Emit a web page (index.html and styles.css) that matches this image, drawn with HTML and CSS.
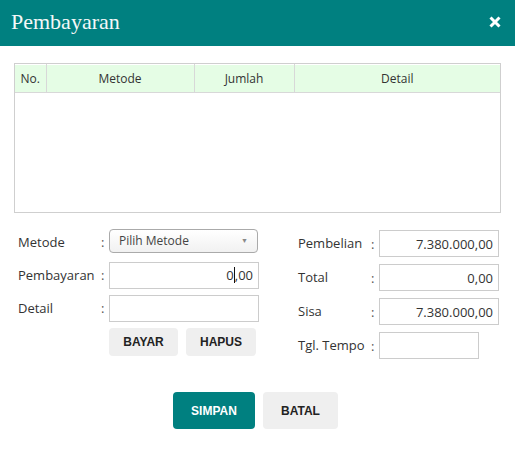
FILE: index.html
```html
<!DOCTYPE html>
<html>
<head>
<meta charset="utf-8">
<link rel="stylesheet" href="styles.css">
</head>
<body>
<div class="modal">
  <div class="modal-header">
    <h1 class="title">Pembayaran</h1>
    <svg class="close" width="12" height="12" viewBox="0 0 12 12"><path d="M1.5 1.5 L10.5 10.5 M10.5 1.5 L1.5 10.5" stroke="#fff" stroke-width="3" stroke-linecap="butt"/></svg>
  </div>
  <div class="modal-body">
    <div class="table-wrap">
      <table class="pay-table">
        <thead>
          <tr>
            <th class="c-no">No.</th>
            <th class="c-metode">Metode</th>
            <th class="c-jumlah">Jumlah</th>
            <th class="c-detail">Detail</th>
          </tr>
        </thead>
      </table>
    </div>
    <div class="form">
      <div class="col col-left">
        <div class="row">
          <span class="label">Metode</span><span class="colon">:</span>
          <div class="select"><span>Pilih Metode</span><span class="arrow">&#x25BC;</span></div>
        </div>
        <div class="row">
          <span class="label">Pembayaran</span><span class="colon">:</span>
          <div class="field right">0<span class="caret"></span>,00</div>
        </div>
        <div class="row">
          <span class="label">Detail</span><span class="colon">:</span>
          <div class="field"></div>
        </div>
        <div class="row btn-row">
          <span class="label"></span><span class="colon"></span>
          <div class="btns">
            <button class="btn btn-small bayar">BAYAR</button>
            <button class="btn btn-small hapus">HAPUS</button>
          </div>
        </div>
      </div>
      <div class="col col-right">
        <div class="row">
          <span class="label">Pembelian</span><span class="colon">:</span>
          <div class="field right">7.380.000,00</div>
        </div>
        <div class="row">
          <span class="label">Total</span><span class="colon">:</span>
          <div class="field right">0,00</div>
        </div>
        <div class="row">
          <span class="label">Sisa</span><span class="colon">:</span>
          <div class="field right">7.380.000,00</div>
        </div>
        <div class="row">
          <span class="label">Tgl. Tempo</span><span class="colon">:</span>
          <div class="field short"></div>
        </div>
      </div>
    </div>
    <div class="footer">
      <button class="btn btn-big primary">SIMPAN</button>
      <button class="btn btn-big">BATAL</button>
    </div>
  </div>
</div>
</body>
</html>
```
FILE: styles.css
```css
html, body {
  margin: 0;
  padding: 0;
  background: #fff;
}
body {
  font-family: "Open Sans", "Liberation Sans", sans-serif;
  font-size: 13px;
  color: #333;
}
.modal {
  width: 515px;
  height: 451px;
  background: #fff;
}
.modal-header {
  height: 46px;
  background: #008080;
  display: flex;
  align-items: center;
  justify-content: space-between;
  padding: 0 14px 0 11px;
  box-sizing: border-box;
}
.title {
  margin: 0;
  font-family: "Liberation Serif", "DejaVu Serif", serif;
  font-weight: normal;
  font-size: 22px;
  color: #f4f8f8;
  line-height: 1;
  padding-bottom: 2px;
}
.close {
  display: block;
  margin-bottom: 2px;
}
.modal-body {
  padding: 17px 14px 0 14px;
}
.table-wrap {
  width: 487px;
  height: 150px;
  border: 1px solid #cfcfcf;
  box-sizing: border-box;
}
.pay-table {
  width: 100%;
  border-collapse: collapse;
}
.pay-table th {
  height: 28px;
  padding: 0;
  background: #e5fde5;
  font-weight: normal;
  font-size: 12px;
  color: #333;
  text-align: center;
  border-right: 1px solid #d8d8d8;
  border-bottom: 1px solid #d8d8d8;
  box-sizing: border-box;
}
.pay-table th:last-child {
  border-right: none;
}
.pay-table tr {
  border-top: 1px solid #fff;
}
.c-no { width: 31px; }
.c-metode { width: 148px; }
.c-jumlah { width: 100px; }
.form {
  display: flex;
  margin-top: 16px;
}
.col {
  display: flex;
  flex-direction: column;
}
.col-left {
  padding-left: 4px;
  width: 280px;
  gap: 7px;
}
.col-right {
  padding-top: 1px;
  gap: 7px;
}
.row {
  display: flex;
  align-items: center;
  height: 26px;
}
.col-right .row {
  height: 27px;
}
.col-left .label { width: 83px; }
.col-right .label { width: 73px; }
.label {
  margin-top: -1px;
}
.colon {
  width: 8px;
  color: #555;
}
.field {
  width: 150px;
  height: 27px;
  border: 1px solid #ccc;
  box-sizing: border-box;
  padding: 0 5px;
  display: flex;
  align-items: center;
  background: #fff;
  color: #333;
}
.col-right .field {
  width: 120px;
}
.col-right .field.short {
  width: 100px;
}
.field.right {
  justify-content: flex-end;
}
.caret {
  display: inline-block;
  width: 1px;
  height: 16px;
  background: #111;
}
.select {
  width: 149px;
  height: 24px;
  border: 1px solid #aaa;
  border-radius: 4px;
  box-sizing: border-box;
  background: linear-gradient(#fff, #f1f1f1);
  display: flex;
  align-items: center;
  justify-content: space-between;
  padding: 0 9px 0 9px;
  font-size: 12px;
  color: #444;
  margin-top: -3px;
}
.arrow {
  font-size: 7px;
  color: #888;
}
.btn-row {
  height: 28px;
}
.btns {
  display: flex;
  gap: 8px;
}
.btn {
  border: none;
  font-family: "Liberation Sans", Arial, sans-serif;
  font-weight: bold;
  font-size: 12px;
  color: #222;
  background: #efefef;
  border-radius: 4px;
  padding: 0;
  cursor: pointer;
}
.btn-small {
  height: 28px;
}
.bayar { width: 69px; }
.hapus { width: 70px; }
.footer {
  display: flex;
  justify-content: center;
  gap: 8px;
  margin-top: 33px;
  padding-right: 4px;
}
.btn-big {
  height: 37px;
  width: 75px;
}
.btn-big.primary {
  width: 82px;
  background: #008080;
  color: #fff;
}
```
